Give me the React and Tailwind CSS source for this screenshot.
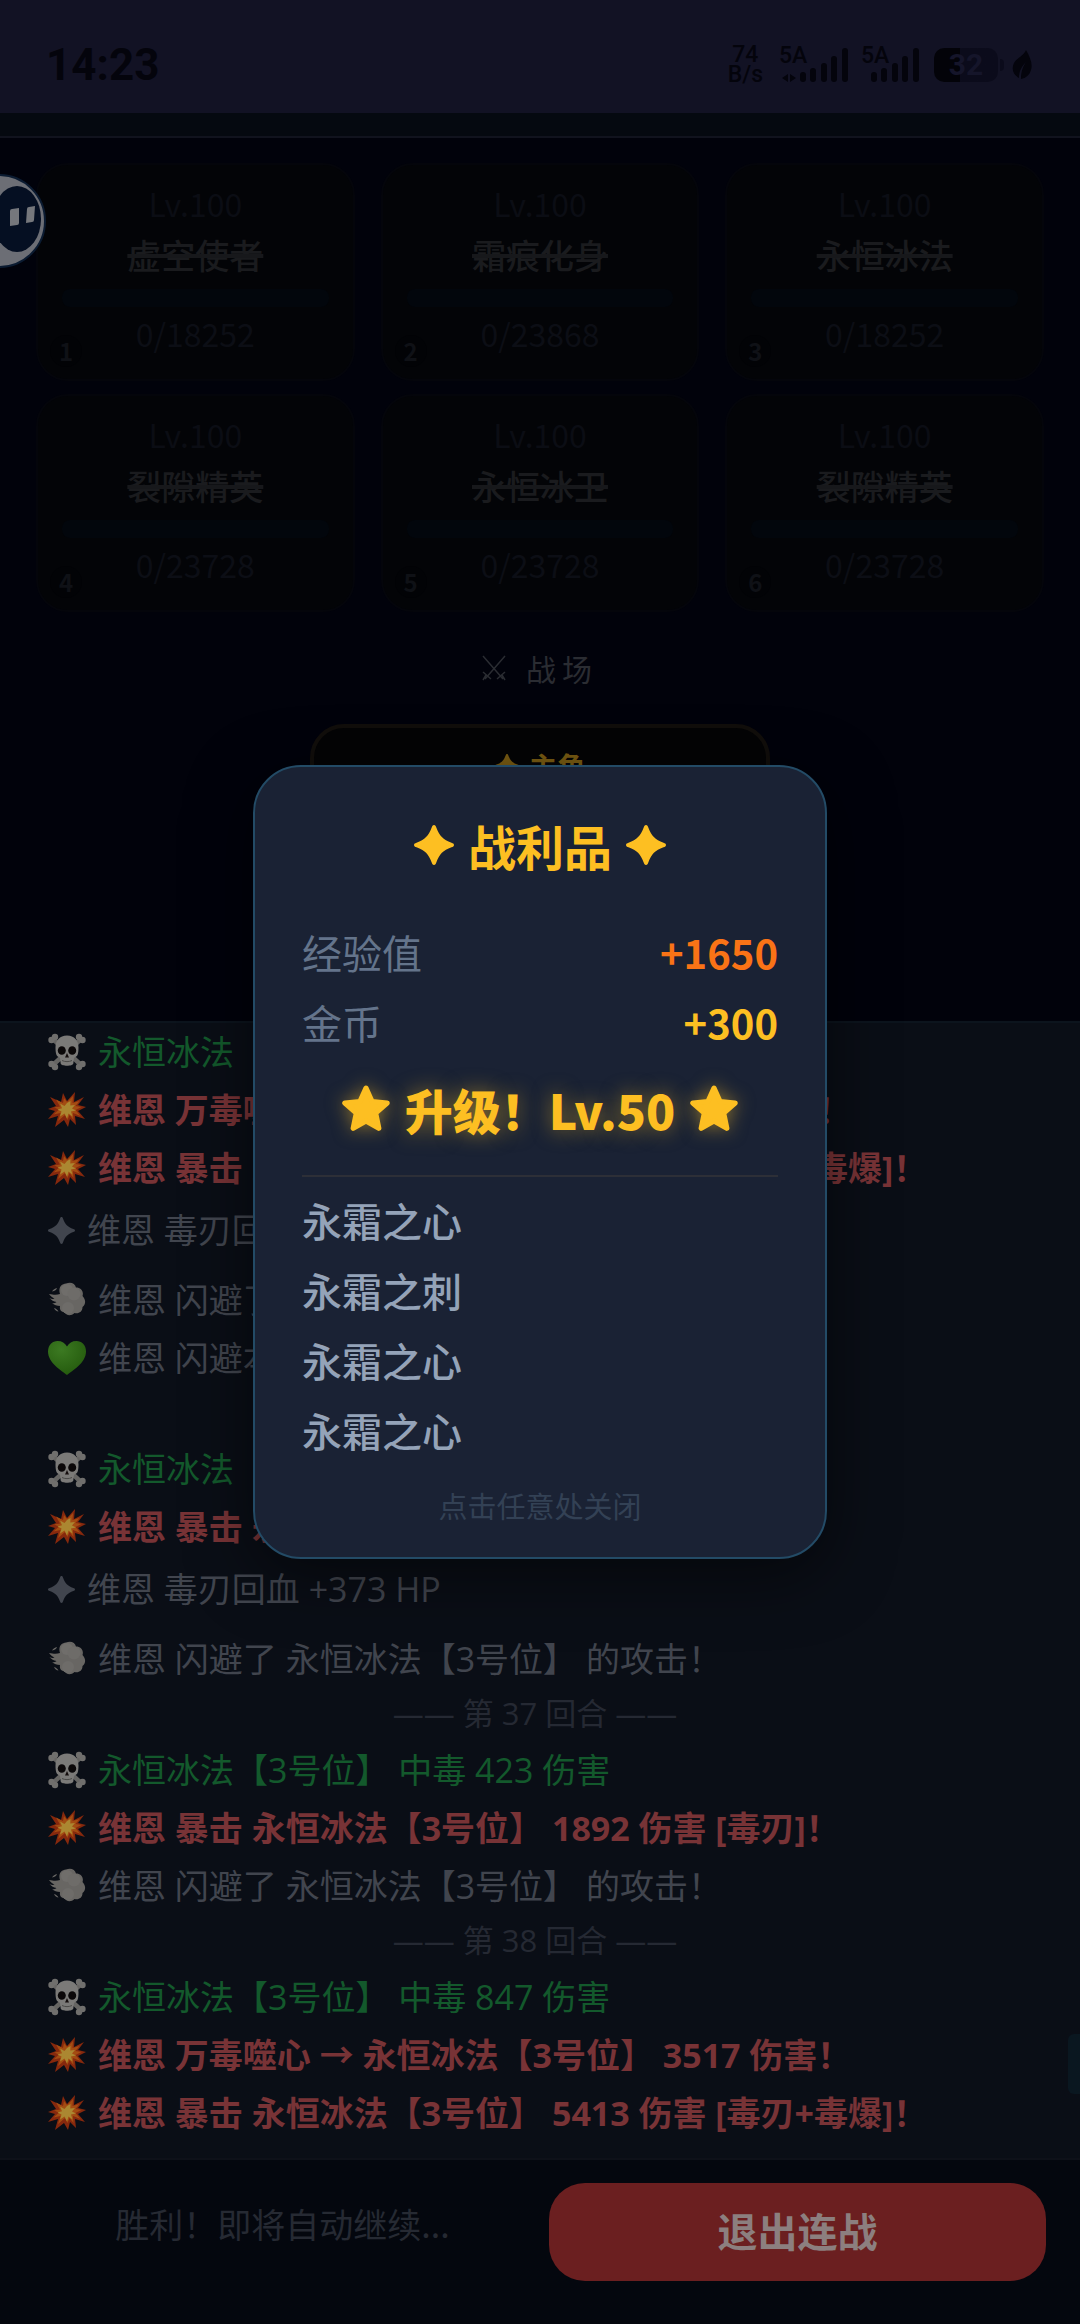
import React from "react";

const enemies = [
  { id: 1, name: "虚空使者", hp: "0/18252" },
  { id: 2, name: "霜痕化身", hp: "0/23868" },
  { id: 3, name: "永恒冰法", hp: "0/18252" },
  { id: 4, name: "裂隙精英", hp: "0/23728" },
  { id: 5, name: "永恒冰卫", hp: "0/23728" },
  { id: 6, name: "裂隙精英", hp: "0/23728" },
];

const logs = [
  { type: "poison", text: "永恒冰法【3号位】 中毒 423 伤害" },
  { type: "crit", text: "维恩 万毒噬心 → 永恒冰法【3号位】 3517 伤害！" },
  { type: "crit", text: "维恩 暴击 永恒冰法【3号位】 5413 伤害 [毒刃+毒爆]！" },
  { type: "heal", text: "维恩 毒刃回血 +373 HP" },
  { type: "dodge", text: "维恩 闪避了 永恒冰法【3号位】 的攻击！" },
  { type: "regen", text: "维恩 闪避本能回血" },
  { type: "round", text: "—— 第 36 回合 ——" },
  { type: "poison", text: "永恒冰法【3号位】 中毒 423 伤害" },
  { type: "crit", text: "维恩 暴击 永恒冰法【3号位】 1892 伤害 [毒刃]！" },
  { type: "heal", text: "维恩 毒刃回血 +373 HP" },
  { type: "dodge", text: "维恩 闪避了 永恒冰法【3号位】 的攻击！" },
  { type: "round", text: "—— 第 37 回合 ——" },
  { type: "poison", text: "永恒冰法【3号位】 中毒 423 伤害" },
  { type: "crit", text: "维恩 暴击 永恒冰法【3号位】 1892 伤害 [毒刃]！" },
  { type: "dodge", text: "维恩 闪避了 永恒冰法【3号位】 的攻击！" },
  { type: "round", text: "—— 第 38 回合 ——" },
  { type: "poison", text: "永恒冰法【3号位】 中毒 847 伤害" },
  { type: "crit", text: "维恩 万毒噬心 → 永恒冰法【3号位】 3517 伤害！" },
  { type: "crit", text: "维恩 暴击 永恒冰法【3号位】 5413 伤害 [毒刃+毒爆]！" },
];

const loot = ["永霜之心", "永霜之刺", "永霜之心", "永霜之心"];

const logColor = {
  poison: "text-[#13592c]",
  crit: "text-[#783336] font-bold",
  heal: "text-[#41454e]",
  dodge: "text-[#41454e]",
  regen: "text-[#41454e]",
};

function Sparkle({ className }) {
  return (
    <svg viewBox="0 0 40 40" className={className} fill="currentColor" aria-hidden="true">
      <path d="M20 0c1.300 0 1.800 1 2.300 2.500 3.200 8.500 6.700 12 15.200 15.200 1.500.5 2.500 1 2.500 2.300s-1 1.800-2.500 2.300c-8.500 3.200-12 6.700-15.200 15.200-.5 1.500-1 2.500-2.300 2.500s-1.800-1-2.300-2.500c-3.200-8.500-6.700-12-15.200-15.200C1 21.800 0 21.300 0 20s1-1.800 2.500-2.300c8.500-3.200 12-6.700 15.200-15.200C18.200 1 18.700 0 20 0z" />
    </svg>
  );
}

function Star() {
  return (
    <svg viewBox="0 0 48 48" className="size-[50px] drop-shadow-[0_0_9px_rgba(251,191,36,0.5)]" fill="#fdbf22" stroke="#fdbf22" strokeWidth="5" strokeLinejoin="round" aria-hidden="true">
      <path d="M24 4l5.800 12.800 14.500 1.500-11 9.700 3 14.500L24 35.500 11.700 42.500l3-14.500L3.700 18.300l14.500-1.500z" />
    </svg>
  );
}

function Skull() {
  return (
    <svg viewBox="0 0 38 38" className="size-[38px]" aria-hidden="true">
      <path d="M6 7l26 24M32 7L6 31" stroke="#666563" strokeWidth="4.500" />
      <g fill="#706f6d">
        <circle cx="3.500" cy="7" r="3.200" /><circle cx="7" cy="4" r="3.200" />
        <circle cx="34.500" cy="7" r="3.200" /><circle cx="31" cy="4" r="3.200" />
        <circle cx="3.500" cy="31" r="3.200" /><circle cx="7" cy="34" r="3.200" />
        <circle cx="34.500" cy="31" r="3.200" /><circle cx="31" cy="34" r="3.200" />
      </g>
      <path d="M19 2.500c7.500 0 11.500 5 11.500 12 0 3.500-.3 5.500-1 7.500-.6 1.800-2.500 2-3.500 3l-.7 5.500c-.4 3-12.200 3-12.600 0l-.7-5.500c-1-1-2.900-1.200-3.500-3-.7-2-1-4-1-7.500 0-7 4-12 11.500-12z" fill="#7b7a78" />
      <ellipse cx="13.800" cy="17.500" rx="4" ry="4.300" fill="#0b0809" />
      <ellipse cx="24.200" cy="17.500" rx="4" ry="4.300" fill="#0b0809" />
      <path d="M19 20l2 4.500h-4z" fill="#140d0d" />
      <path d="M14 27.500c3 1.500 7 1.500 10 0" stroke="#4b4a48" strokeWidth="1" fill="none" />
    </svg>
  );
}

function Boom() {
  return (
    <svg viewBox="0 0 38 38" className="size-[38px]" aria-hidden="true">
      <path d="M19 10L27 1l-1 10 10-5-6 8 8 2-8 4 7 8-10-3 1 9-6-6-2 8-4-7L7 36l3-11-10 3 7-8-7-2 8-3-6-9 11 5 2-9z" fill="#86280d" />
      <path d="M19 11l6-6-.5 7 7-2-4 5 6 1-6 3 5 6-7.500-3 .5 7-4-5-2 5-2.500-5-7 6 2.500-8-7 1.500 5.500-5-5-2 6-1-4-7 7 3.500 1-5z" fill="#a34c12" />
      <path d="M19 12l3.500-2-.2 4.500L27 14l-3 3.500 4 2-5 1 1.500 5-4-3-1.500 5-2.500-5-4.500 3 1.500-5-4-2 4.500-1.200L12 12.500l4.500 2.500z" fill="#ab8731" />
    </svg>
  );
}

function Dash() {
  return (
    <svg viewBox="0 0 38 38" className="size-[38px]" aria-hidden="true">
      <path d="M1 13c5 1 8 1 11 0-2-6 1-10 6-10.500 5-2 9 0 10 4 5 0 8 4 6.500 8.500 4 4 3 9 0 11 0 5-4 7-8 6-4 4-9 2-10-1-4 0-5-3-4.500-6-3 0-6-1-8-3 2.500.5 3.500 0 4.500-1-3-.5-5-1.500-7-4 3 1.500 4 1 5 .5-2-1-4-2-5.500-4.500z" fill="#686663" />
      <circle cx="19" cy="9" r="6" fill="#706e6b" /><circle cx="26" cy="13" r="6.500" fill="#6e6c69" />
      <circle cx="20" cy="27" r="6" fill="#6e6c69" />
      <path d="M4 10.500c1-2 3-3 5-3.500-.5 2-2 3-5 3.500zM6 27c2 .5 4 2 4.500 3.500C8.500 30.500 7 29 6 27z" fill="#686664" />
    </svg>
  );
}

function Heart() {
  return (
    <svg viewBox="0 0 38 38" className="size-[38px]" aria-hidden="true">
      <defs>
        <radialGradient id="heart" cx="0.350" cy="0.250" r="0.800">
          <stop offset="0" stopColor="#3c7a22" /><stop offset="1" stopColor="#245a0d" />
        </radialGradient>
      </defs>
      <path d="M19 36C14 32 0 24 0 12.500 0 6 4.500 2 9.500 2c4.500 0 7.500 2 9.500 5.500C21 4 24 2 28.500 2 33.500 2 38 6 38 12.500 38 24 24 32 19 36z" fill="url(#heart)" />
    </svg>
  );
}

const logIcon = {
  poison: <Skull />,
  crit: <Boom />,
  heal: <Sparkle className="size-[27px]" />,
  dodge: <Dash />,
  regen: <Heart />,
};

function Bars() {
  return (
    <svg viewBox="0 0 48 36" className="h-9 w-12" fill="currentColor" aria-hidden="true">
      <rect x="0" y="25" width="6" height="10" rx="3" />
      <rect x="10" y="21" width="6" height="14" rx="3" />
      <rect x="21" y="16" width="6" height="19" rx="3" />
      <rect x="31" y="9" width="6" height="26" rx="3" />
      <rect x="42" y="1" width="6" height="34" rx="3" />
    </svg>
  );
}

function StatusBar() {
  return (
    <header className="flex h-[113px] shrink-0 items-center justify-between bg-[#121224] pl-[46px] pr-12 pt-4 text-[#04040c]">
      <time className="font-['Roboto','Noto_Sans_CJK_SC',sans-serif] text-[44px] leading-12 font-bold">14:23</time>
      <div className="flex items-center font-['Roboto','Noto_Sans_CJK_SC',sans-serif]">
        <div className="mr-4 text-center text-[23px] leading-5 font-medium">
          <div>74</div>
          <div>B/s</div>
        </div>
        <div className="relative pl-[21px]">
          <span className="absolute -top-px left-0 text-[23px] leading-5 font-medium">5A</span>
          <svg viewBox="0 0 16 10" className="absolute bottom-0 left-0.5 h-2.5 w-4" fill="currentColor" aria-hidden="true">
            <path d="M7 1v8L1 5zM9 1v8l6-4z" />
          </svg>
          <Bars />
        </div>
        <div className="relative ml-[13px] pl-2.5">
          <span className="absolute -top-px left-0 text-[23px] leading-5 font-medium">5A</span>
          <Bars />
        </div>
        <div className="ml-[15px] flex items-center">
          <div className="flex h-[34px] w-16 items-center justify-center rounded-[10px] bg-linear-to-r from-[#030309] from-40% to-[#0b0b1b] to-40% text-[30px] leading-8 font-bold text-[#15152a]">32</div>
          <div className="ml-0.5 h-3 w-1 rounded-r bg-[#0b0b1b]" />
        </div>
        <svg viewBox="0 0 20 30" className="ml-2 h-[30px] w-5" fill="currentColor" aria-hidden="true">
          <path d="M14 0c4 7 7 14 5 20-1.500 5-5 8-10 9 0-6 1-11 5-17-5 5-7 10-7 16C2 25 0 21 1 16 2 9 11 7 14 0z" />
        </svg>
      </div>
    </header>
  );
}

function EnemyCard({ enemy }) {
  return (
    <article className="relative flex h-[218px] flex-col items-center rounded-[32px] border-2 border-[#04050b] bg-[#030407] px-6 pt-[18px]">
      <div className="text-[32px] leading-10 text-[#0b0d14]">Lv.100</div>
      <h2 className="mt-1.5 text-[34px] leading-[52px] font-medium text-[#1a1b1e] line-through decoration-[#17181b] decoration-4">{enemy.name}</h2>
      <div className="mt-2 h-[18px] w-full rounded-lg bg-[#02060c]" />
      <div className="mt-1.5 text-[32px] leading-10 text-[#0c0e15]">{enemy.hp}</div>
      <span className="absolute bottom-3 left-3 flex size-8 items-center justify-center rounded-full bg-[#020306] text-2xl leading-8 font-bold text-[#0f1116]">{enemy.id}</span>
    </article>
  );
}

function LogLine({ entry }) {
  if (entry.type === "round") {
    return <li className="h-[53px] text-center text-[31px] leading-[50px] text-[#252933]">{entry.text}</li>;
  }
  const box = entry.type === "heal" ? "flex h-[74px] items-center gap-3 pb-2" : "flex h-[58px] items-center gap-3";
  return (
    <li className={`${box} text-[34px] leading-[50px] whitespace-nowrap ${logColor[entry.type]}`}>
      <span className="shrink-0">{logIcon[entry.type]}</span>
      <span>{entry.text}</span>
    </li>
  );
}

function FloatingBall() {
  return (
    <button type="button" aria-label="助手" className="absolute top-[172px] left-0">
      <svg viewBox="0 0 48 98" className="h-[98px] w-12" aria-hidden="true">
        <circle cx="-1" cy="49" r="46" fill="#6c6e75" stroke="#0b1b31" strokeWidth="2" />
        <ellipse cx="17" cy="47" rx="24" ry="33" fill="#050f22" />
        <path d="M10 39q0-2 2-2l7-1v15q0 2-2 2l-7 1zM27 37q0-2 2-2l6-1-1 14q0 2-2 2l-6 1z" fill="#75777c" />
      </svg>
    </button>
  );
}

function LootDialog() {
  return (
    <div className="absolute inset-0 flex items-center justify-center">
      <section role="dialog" aria-label="战利品" className="w-[574px] max-w-full rounded-[48px] border-2 border-[#234b66] bg-[#1a2234] px-[47px] pt-[50px] pb-8 shadow-[0_16px_64px_rgba(0,0,0,0.5)]">
        <h1 className="flex items-center justify-center gap-3.5 text-5xl leading-14 font-bold text-[#fdbf22]">
          <Sparkle className="size-10" />
          战利品
          <Sparkle className="size-10" />
        </h1>
        <dl className="mt-11 text-[40px] leading-[70px]">
          <div className="flex justify-between">
            <dt className="text-[#64748b]">经验值</dt>
            <dd className="font-bold text-[#f97316]">+1650</dd>
          </div>
          <div className="flex justify-between">
            <dt className="text-[#64748b]">金币</dt>
            <dd className="font-bold text-[#fdbf22]">+300</dd>
          </div>
        </dl>
        <p className="mt-5 flex items-center justify-center gap-3.5 text-5xl leading-16 font-black whitespace-nowrap text-[#fdbf22] [text-shadow:0_0_20px_rgba(251,191,36,0.5)]">
          <Star />
          <span>升级！Lv.50</span>
          <Star />
        </p>
        <ul className="mt-[34px] border-t-2 border-[#2d2f37] pt-2 text-[40px] leading-[70px] font-medium text-[#94a3b8]">
          {loot.map((item, i) => (
            <li key={i}>{item}</li>
          ))}
        </ul>
        <p className="mt-5 text-center text-[29px] leading-10 text-[#334155]">点击任意处关闭</p>
      </section>
    </div>
  );
}

export default function App() {
  return (
    <div className="relative flex min-h-screen flex-col overflow-hidden bg-[#01020b] font-['Noto_Sans_CJK_SC',sans-serif]">
      <StatusBar />
      <div className="h-[25px] shrink-0 border-b-2 border-[#11131e] bg-[#050910]" />
      <main className="flex flex-1 flex-col">
        <section className="grid grid-cols-3 gap-x-[26px] gap-y-[13px] px-9 pt-[25px]">
          {enemies.map((e) => (
            <EnemyCard key={e.id} enemy={e} />
          ))}
        </section>
        <div className="mt-8 flex items-center justify-center gap-5 text-[#2a2c32]">
          <svg viewBox="0 0 24 26" className="h-[26px] w-6" fill="none" stroke="currentColor" strokeWidth="1.500" aria-hidden="true">
            <path d="M1 1l20 23M23 1L3 24M1 17l8 7M23 17l-8 7M4 20l-3 5M20 20l3 5" />
          </svg>
          <h2 className="text-[30px] leading-[48px] tracking-[0.2em]">战场</h2>
        </div>
        <section className="mx-auto mt-[32px] h-[220px] w-[460px] rounded-[34px] border-4 border-[#110e0b] bg-[#040405] pt-5">
          <div className="flex items-center justify-center gap-2.5 text-[28px] leading-9 font-bold text-[#7a5c12]">
            <Sparkle className="size-6" />
            主角
          </div>
        </section>
      </main>
      <section className="relative shrink-0 border-t-2 border-b-2 border-t-[#0c141d] border-b-[#0e1119] bg-[#0a0e16] pr-[58px] pb-4 pl-12 font-['Open_Sans','Noto_Sans_CJK_SC',sans-serif]">
        <ul>
          {logs.map((entry, i) => (
            <LogLine key={i} entry={entry} />
          ))}
        </ul>
        <div className="absolute right-0 bottom-16 h-[60px] w-3 rounded-l-md bg-[#0a1720]" />
      </section>
      <footer className="grid h-[164px] shrink-0 grid-cols-2 items-start gap-[18px] bg-[#04070e] pt-[23px] pr-[34px] pl-[34px]">
        <p className="pt-4 text-center text-[34px] leading-[50px] text-[#262a33]">胜利！即将自动继续...</p>
        <button type="button" className="h-[98px] rounded-[36px] bg-[#6b1f20] pb-1 text-[40px] leading-[60px] font-bold text-[#8c7f7f]">退出连战</button>
      </footer>
      <FloatingBall />
      <LootDialog />
    </div>
  );
}
